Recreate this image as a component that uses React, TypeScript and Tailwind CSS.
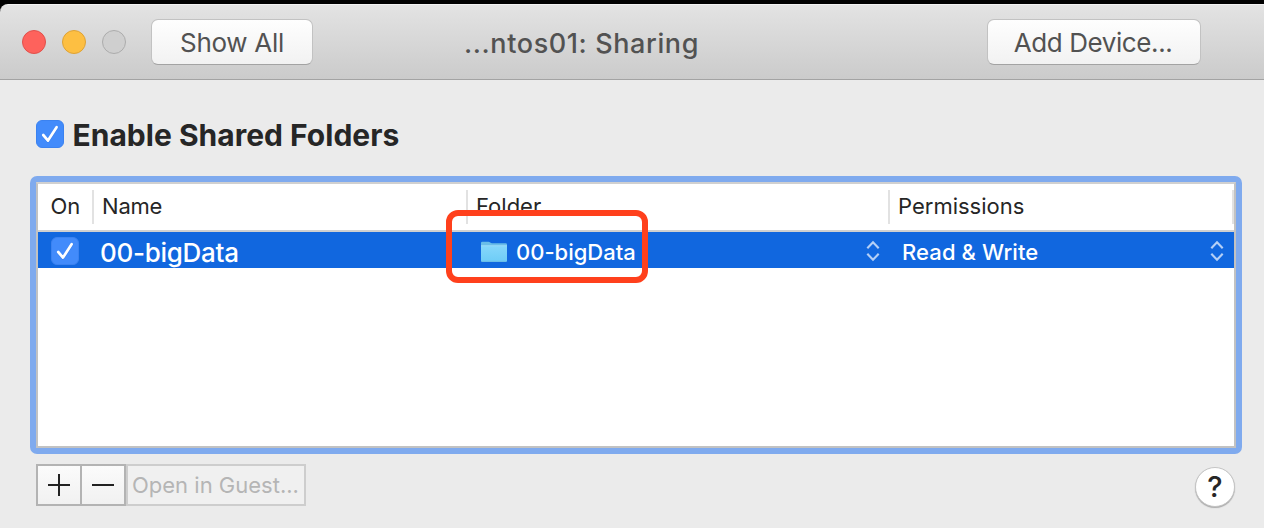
import type { ReactNode } from "react";

function Check() {
  return (
    <span className="flex size-7 shrink-0 items-center justify-center rounded-[6px] border border-[#3b82f0] bg-[#428bfb]">
      <svg viewBox="0 0 28 28" className="size-7 shrink-0" fill="none">
        <path d="M7.2 15.6 12 21 20.8 7.4" stroke="#2468d0" strokeOpacity=".4" strokeWidth="3" strokeLinecap="round" strokeLinejoin="round" />
        <path d="M7.2 15 12 20.6 20.6 7.2" stroke="#fff" strokeWidth="2.7" strokeLinecap="round" strokeLinejoin="round" />
      </svg>
    </span>
  );
}

function Stepper() {
  return (
    <svg viewBox="0 0 14 22" className="mt-[2px] h-[22px] w-[14px] shrink-0" fill="none" stroke="#b4cff6" strokeWidth="2.1">
      <path d="M1.3 8.3 7 2.2 12.7 8.3M1.3 13.7 7 19.8 12.7 13.7" />
    </svg>
  );
}

function FolderIcon() {
  return (
    <svg viewBox="0 0 26 22" className="mt-[3px] h-[22px] w-[26px] shrink-0">
      <defs>
        <linearGradient id="folder" x1="0" y1="0" x2="0" y2="1">
          <stop offset="0" stopColor="#86d7fb" />
          <stop offset="1" stopColor="#6fcdf7" />
        </linearGradient>
      </defs>
      <path d="M0 2Q0 .7 1.3.7H7.5Q8.4.7 9.2 1.5T11 2.3H24.7Q26 2.3 26 3.6V20Q26 21 25 21H1Q0 21 0 20Z" fill="#6abde8" />
      <path d="M0 5H26V19.8H0Z" fill="url(#folder)" />
      <path d="M0 4.7H26" stroke="#a5e1fb" strokeWidth=".8" />
    </svg>
  );
}

function TitleButton({ className, children }: { className: string; children: ReactNode }) {
  return (
    <button
      className={`flex h-[46px] shrink-0 items-center justify-center rounded-[7px] border border-[#c2c2c2] border-b-[#a3a3a3] bg-linear-to-b from-[#fefefe] to-[#f2f2f2] pt-px text-[26px] leading-8 whitespace-nowrap text-[#525252] ${className}`}
    >
      {children}
    </button>
  );
}

export default function App() {
  return (
    <div className="relative flex h-[528px] w-[1264px] flex-col overflow-hidden bg-black pt-1 font-['Inter',sans-serif] text-[#262626]">
      <header className="flex h-[76px] shrink-0 rounded-tl-[8px] border-t border-b border-t-[#f2f2f2] border-b-[#a3a3a3] bg-linear-to-b from-[#e3e3e3] to-[#cbcbcb] pt-[14px] pl-[22px]">
        <div className="flex h-[46px] items-center gap-4">
          <i className="size-6 rounded-full border border-[#e1504b] bg-[#fe625c]" />
          <i className="size-6 rounded-full border border-[#dea236] bg-[#fdbf42]" />
          <i className="size-6 rounded-full border border-[#acacac] bg-[#cfcfcf]" />
        </div>
        <TitleButton className="ml-[25px] w-[162px] tracking-[-0.3px]">Show All</TitleButton>
        <h1 className="ml-[151px] h-[50px] w-[523px] text-[27px] leading-[49px] font-medium tracking-[0.6px] whitespace-nowrap text-[#525252]">
          ...ntos01: Sharing
        </h1>
        <TitleButton className="w-[214px] pr-[2px] tracking-[-0.4px]">Add Device...</TitleButton>
      </header>

      <main className="flex flex-1 flex-col bg-[#ebebeb] pl-[30px]">
        <label className="mt-10 flex h-7 items-center gap-[8px] pl-[6px]">
          <Check />
          <span className="pt-[2px] pl-[0.5px] text-[30px] leading-8 font-bold tracking-[0.01px] whitespace-nowrap">Enable Shared Folders</span>
        </label>

        <section className="mt-7 h-[278px] w-[1212px] shrink-0 rounded-[7px] bg-[#7faaee] p-[6px]">
          <div className="h-full border-2 border-[#c2c2c2] border-t-[#d0d0d0] bg-white">
            <div className="flex h-12 border-b-2 border-[#d0d0d0] pt-[6px] text-[22px] leading-[33px] whitespace-nowrap">
              <div className="h-[34px] w-14 border-r-2 border-[#e2e2e2] pl-[12.5px]">On</div>
              <div className="h-[34px] w-[374px] border-r-2 border-[#e2e2e2] pl-[8px] tracking-[-0.2px]">Name</div>
              <div className="h-[34px] w-[422px] border-r-2 border-[#e2e2e2] pl-[8px]">Folder</div>
              <div className="h-[34px] flex-1 border-r-2 border-[#e2e2e2] pl-[8px]">Permissions</div>
            </div>
            <div className="flex h-9 items-center bg-[#1167df] text-[22px] leading-9 font-medium whitespace-nowrap text-white">
              <div className="w-[62px] pt-[2px] pl-[13px]"><Check /></div>
              <div className="w-[381px] pt-[6px] text-[26px] leading-8 tracking-[-0.3px]">00-bigData</div>
              <FolderIcon />
              <div className="ml-[9px] w-[350px] pt-[4px] leading-8">00-bigData</div>
              <Stepper />
              <div className="ml-[22px] w-[308px] pt-[4px] leading-8 tracking-[0.1px]">Read &amp; Write</div>
              <Stepper />
            </div>
          </div>
        </section>

        <footer className="mt-[10px] flex">
          <button className="ml-[6px] flex h-[42px] w-[46px] items-center justify-center border-2 border-[#b3b3b3] bg-linear-to-b from-[#fbfbfb] to-[#f1f1f1]">
            <svg viewBox="0 0 22 22" className="size-[22px]" stroke="#222" strokeWidth="2"><path d="M0 11H22M11 0V22" /></svg>
          </button>
          <button className="flex h-[42px] w-[44px] items-center justify-center border-2 border-l-0 border-[#b3b3b3] bg-linear-to-b from-[#fbfbfb] to-[#f1f1f1]">
            <svg viewBox="0 0 22 22" className="size-[22px]" stroke="#222" strokeWidth="2"><path d="M0 11H22" /></svg>
          </button>
          <button className="flex h-[42px] w-[180px] items-center border-2 border-[#cdcdcd] bg-[#f0f0f0] pl-[4px] text-[22px] whitespace-nowrap text-[#b5b5b5]">
            Open in Guest...
          </button>
          <button className="mt-[3px] ml-[889px] flex size-10 items-center justify-center rounded-full border border-[#c4c4c4] bg-white text-[29px] leading-8 font-medium shadow-[0_1px_1px_#aaa]">
            ?
          </button>
        </footer>
      </main>

      <div className="absolute top-[210px] left-[446px] h-[73px] w-[202px] rounded-[12px] border-6 border-[#ff401c]" />
    </div>
  );
}
